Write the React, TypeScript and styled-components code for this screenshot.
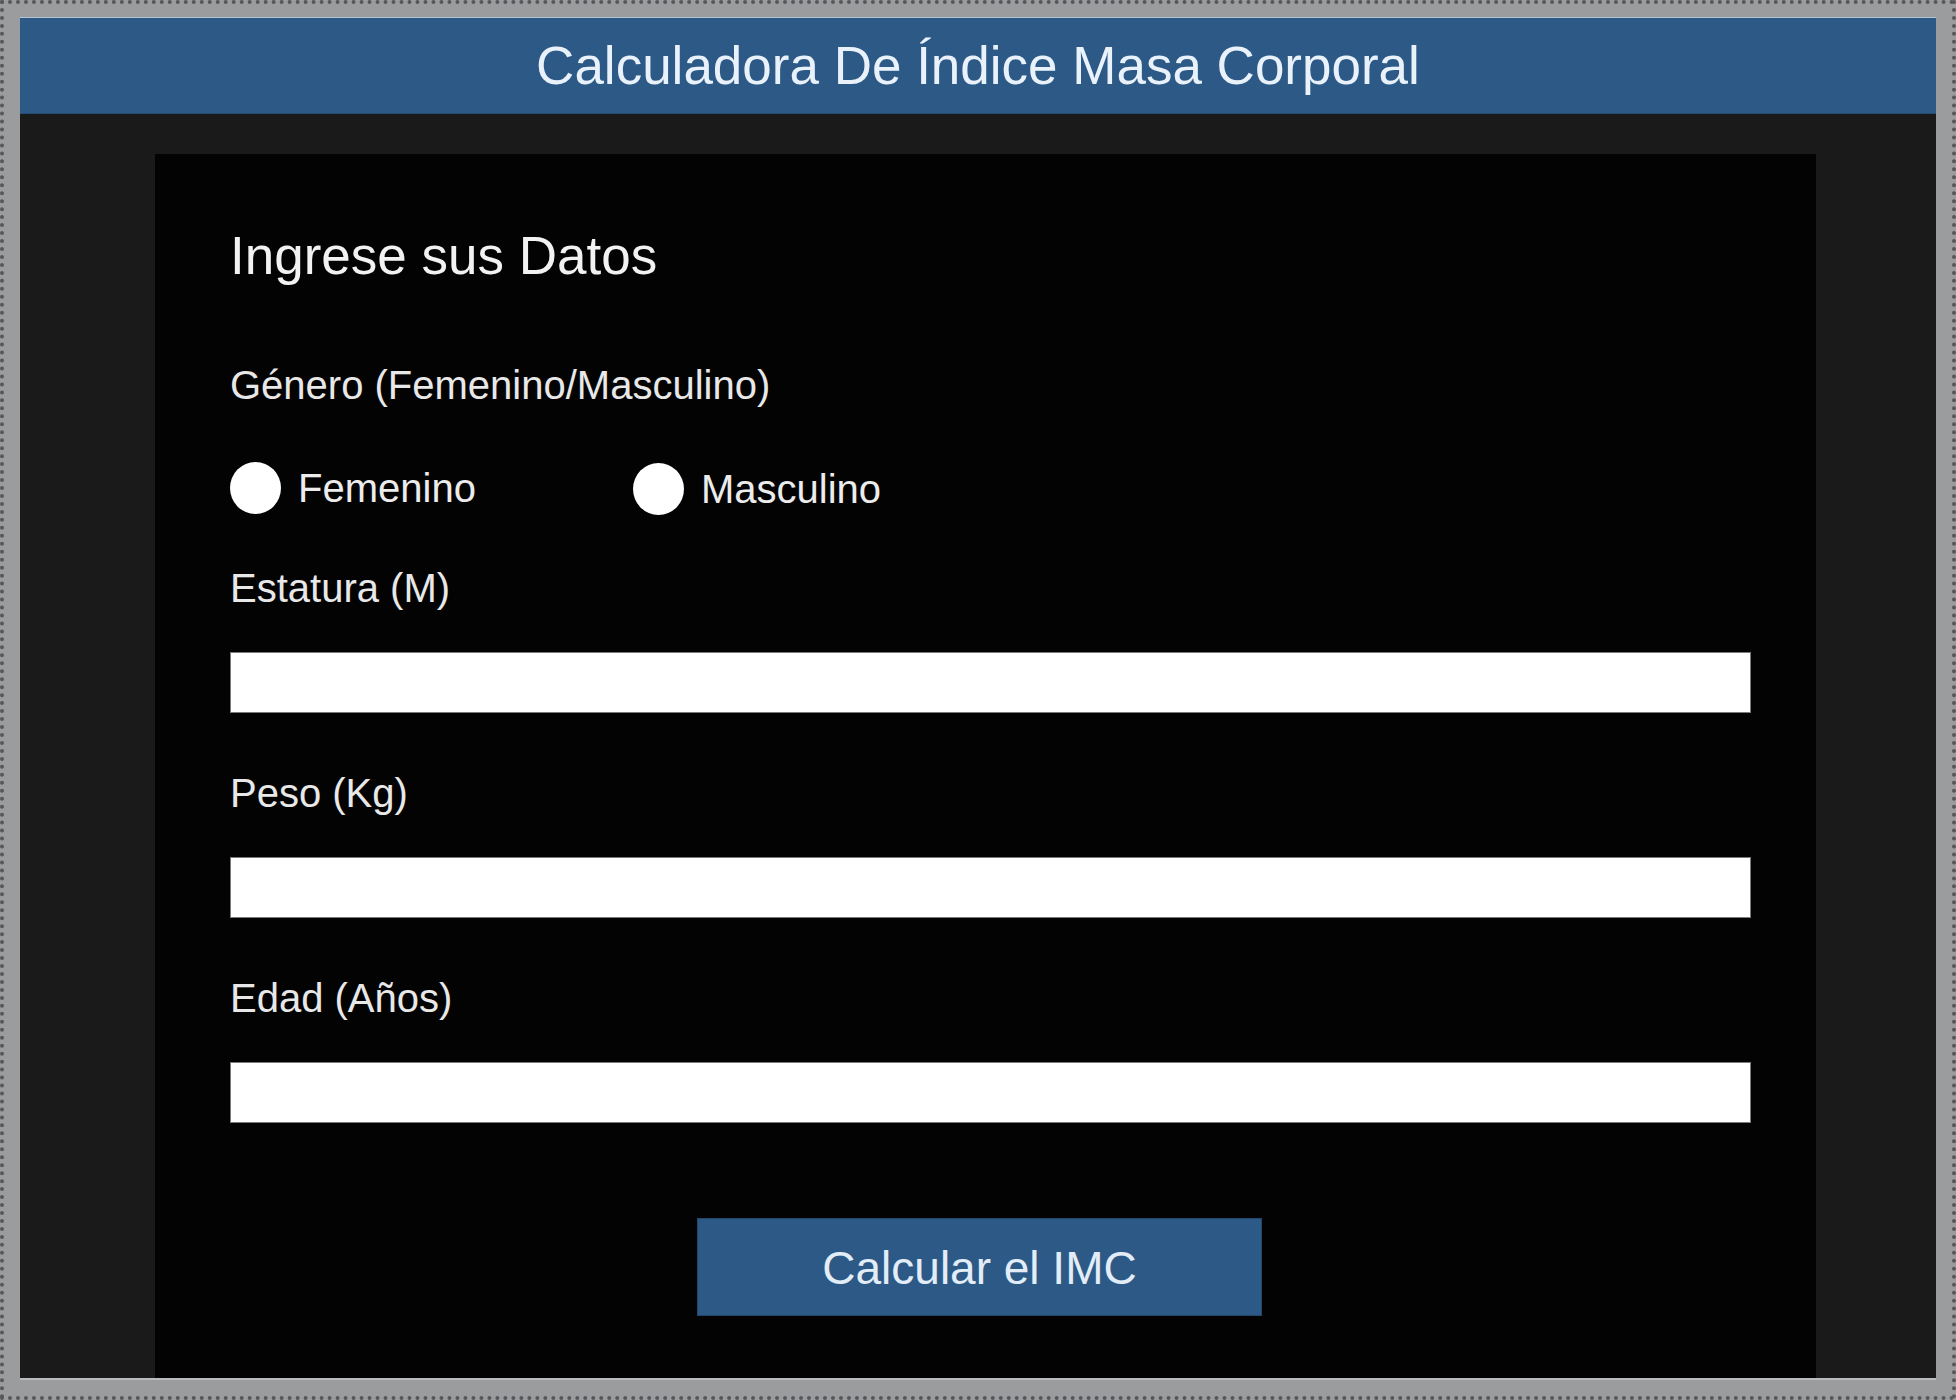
import React from "react";
import styled, { createGlobalStyle } from "styled-components";

const GlobalStyle = createGlobalStyle`
  html, body {
    margin: 0;
    padding: 0;
    background: #9b9c9e;
  }
  * { box-sizing: border-box; }
  body {
    font-family: "Liberation Sans", Arial, sans-serif;
  }
`;

const Frame = styled.div`
  width: 1956px;
  height: 1400px;
  background: #9b9c9e;
  border: 4px dotted #55585b;
  padding: 13px 16px 16px 16px;
  display: flex;
`;

const Window = styled.div`
  flex: 1;
  display: flex;
  flex-direction: column;
  background: #1a1a1a;
  border-top: 1px solid #b6c4d2;
  border-bottom: 2px solid #b9bbbd;
  overflow: hidden;
`;

const Header = styled.header`
  height: 96px;
  flex-shrink: 0;
  background: #2c5986;
  border-bottom: 1px solid #254c73;
  color: #e9f1fb;
  font-size: 53px;
  line-height: 95px;
  text-align: center;
`;

const Card = styled.main`
  margin: 40px 0 0 135px;
  width: 1661px;
  flex: 1;
  background: #030303;
  padding: 72px 0 62px 75px;
  display: flex;
  flex-direction: column;
  align-items: flex-start;
`;

const Heading = styled.h2`
  margin: 0;
  font-size: 53px;
  line-height: 60px;
  font-weight: 400;
  color: #f2f2f2;
`;

const Label = styled.label<{ $mt: number }>`
  display: block;
  margin-top: ${(p) => p.$mt}px;
  font-size: 40px;
  line-height: 46px;
  color: #e8e8e8;
`;

const RadioRow = styled.div`
  margin-top: 53px;
  height: 53px;
  display: flex;
  align-items: center;
`;

const RadioItem = styled.label<{ $drop?: number }>`
  width: 403px;
  display: flex;
  align-items: center;
  gap: 17px;
  font-size: 40px;
  line-height: 46px;
  color: #ececec;
  padding-top: ${(p) => p.$drop ?? 0}px;
`;

const RadioDot = styled.span`
  width: 51px;
  height: 52px;
  border-radius: 50%;
  background: #ffffff;
  flex-shrink: 0;
`;

const TextInput = styled.input`
  margin-top: 41px;
  width: 1521px;
  height: 61px;
  background: #ffffff;
  border: 1px solid #7a7a7a;
  border-radius: 0;
  outline: none;
  font-size: 30px;
  padding: 0 12px;
`;

const SubmitButton = styled.button`
  margin-top: 95px;
  margin-left: 467px;
  width: 565px;
  height: 98px;
  background: #2c5986;
  border: 1px solid #22476d;
  color: #e3edf8;
  font-family: "Liberation Sans", Arial, sans-serif;
  font-size: 46px;
  padding-top: 3px;
  cursor: pointer;
`;

export default function App() {
  return (
    <>
      <GlobalStyle />
      <Frame>
        <Window>
          <Header>Calculadora De Índice Masa Corporal</Header>
          <Card>
            <Heading>Ingrese sus Datos</Heading>
            <Label $mt={76}>Género (Femenino/Masculino)</Label>
            <RadioRow>
              <RadioItem>
                <RadioDot />
                Femenino
              </RadioItem>
              <RadioItem $drop={2}>
                <RadioDot />
                Masculino
              </RadioItem>
            </RadioRow>
            <Label $mt={51}>Estatura (M)</Label>
            <TextInput type="text" />
            <Label $mt={57}>Peso (Kg)</Label>
            <TextInput type="text" />
            <Label $mt={57}>Edad (Años)</Label>
            <TextInput type="text" />
            <SubmitButton>Calcular el IMC</SubmitButton>
          </Card>
        </Window>
      </Frame>
    </>
  );
}
